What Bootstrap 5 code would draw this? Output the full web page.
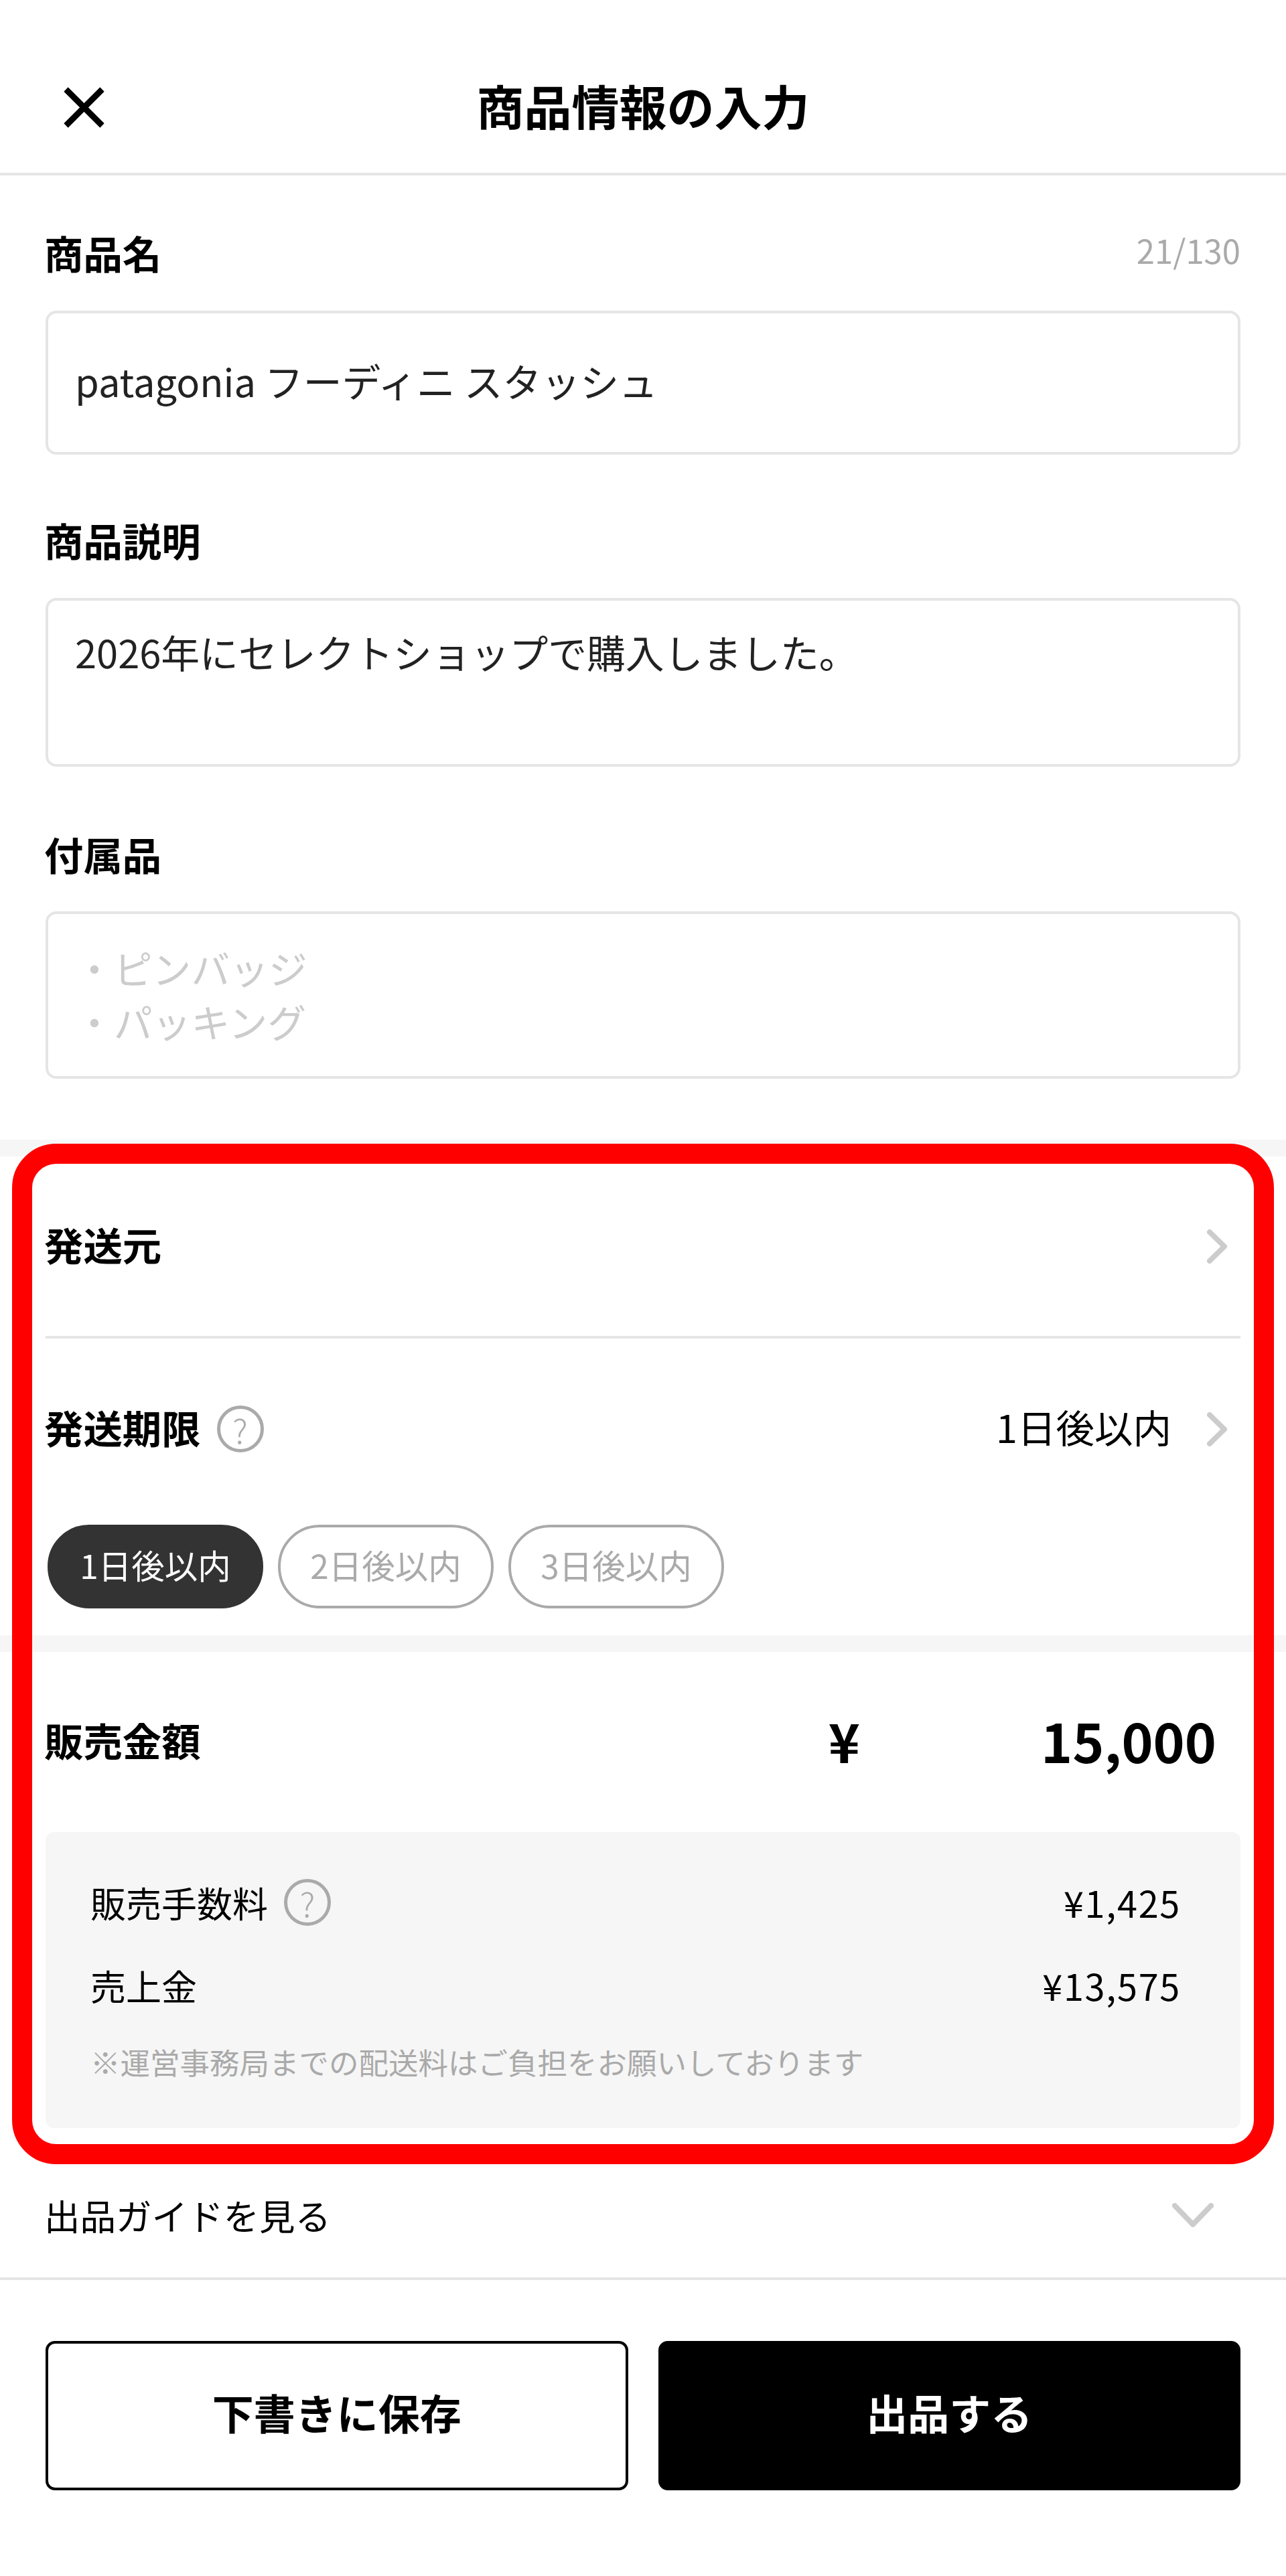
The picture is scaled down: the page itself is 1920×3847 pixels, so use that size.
<!DOCTYPE html>
<html lang="ja">
<head>
<meta charset="UTF-8">
<title>商品情報の入力</title>
<link href="https://cdn.jsdelivr.net/npm/bootstrap@5.3.0/dist/css/bootstrap.min.css" rel="stylesheet">
<style>
    body { font-family: "Noto Sans CJK JP", "Noto Sans", sans-serif; color: #000; background: #fff; height: 3847px; }
    .top-bar { height: 262px; border-bottom: 4px solid #e5e5e5; padding-left: 95px; padding-top: 62px; }
    .top-title { font-size: 71px; font-weight: 700; left: 0; right: 0; top: 156px; transform: translateY(-50%); line-height: 1; }
    .field-head { height: 80px; }
    .head-text { font-size: 58.4px; font-weight: 700; line-height: 1; padding-bottom: 6px; margin-left: -2px; }
    .char-count { font-size: 49px; color: #aaa; padding-bottom: 14px; }
    .form-box.form-control { border: 4px solid #e5e5e5; border-radius: 16px; font-size: 57.8px; color: #222; padding: 0 40px; box-shadow: none; resize: none; overflow: hidden; }
    .form-box::placeholder { color: #ccc; }
    .box-name.form-control { height: 215px; margin-top: 44px; padding-bottom: 8px; }
    .box-desc.form-control { height: 252px; margin-top: 44px; padding-top: 34px; line-height: 84px; }
    .box-extra.form-control { height: 250px; margin-top: 43px; padding-top: 40px; line-height: 80px; }
    .gap-1st { margin-top: 90px; }
    .gap-2nd { margin-top: 93px; }
    .pad-side { padding: 78px 68px 0; }
    .gray-band { height: 25px; background: #f6f6f6; }
    .gray-band.first-band { margin-top: 91px; }
    .ship-from { height: 268px; padding-left: 68px; padding-right: 88px; }
    .thin-rule { height: 4px; background: #e5e5e5; margin: 0 68px; }
    .ship-limit { height: 270px; padding-left: 68px; padding-right: 88px; }
    .val-text { font-size: 57.5px; line-height: 1; padding-bottom: 6px; margin-left: auto; margin-right: 53px; }
    .pill-row { padding: 8px 0 40px 71px; gap: 22px; }
    .pill-opt { width: 322px; height: 125px; border-radius: 62px; border: 4px solid #aaa; color: #aaa; font-size: 49.5px; background: #fff; padding-bottom: 4px; }
    .pill-opt.active-opt { background: #333; border-color: #333; color: #fff; }
    .help-mark { width: 70px; height: 70px; border: 5px solid #aaa; color: #aaa; font-size: 50px; line-height: 1; font-weight: 300; flex: none; }
    .price-row { height: 269px; padding-left: 68px; padding-right: 104px; }
    .yen-mark { font-size: 80px; font-weight: 700; line-height: 1; padding-bottom: 8px; }
    .price-val { width: 532px; text-align: right; font-size: 80px; font-weight: 700; line-height: 1; padding-bottom: 8px; }
    .fee-box { margin: 0 68px; height: 442px; background: #f6f6f6; border-radius: 12px; padding: 65px 89px 0 67px; }
    .fee-row { height: 80px; font-size: 53px; line-height: 1; }
    .fee-row + .fee-row { margin-top: 44px; }
    .fee-amt { font-size: 54px; letter-spacing: 1.7px; }
    .fee-note { font-size: 44.5px; color: #aaa; height: 80px; margin-top: 36px; white-space: nowrap; padding-bottom: 4px; }
    .guide-row { height: 190px; margin-top: 37px; padding-left: 66px; padding-right: 108px; border-bottom: 4px solid #e5e5e5; font-size: 53.5px; }
    .action-row { padding: 91px 68px 0; gap: 45px; }
    .act-btn.btn { flex: 1; height: 223px; font-size: 62px; font-weight: 700; border-radius: 14px; border: 4px solid #000; padding-bottom: 16px; }
    .highlight-frame { left: 18px; top: 1708px; width: 1884px; height: 1524px; border: 30px solid #f00; border-radius: 66px; pointer-events: none; }
</style>
</head>
<body class="position-relative">

<header class="top-bar d-flex align-items-center position-relative">
    <svg width="61" height="61" viewBox="0 0 61 61" class="position-relative z-1" fill="none" stroke="#000" stroke-width="9"><path d="M3.5 3.5 57.5 57.5M57.5 3.5 3.5 57.5"/></svg>
    <div class="top-title position-absolute text-center">商品情報の入力</div>
</header>

<section class="pad-side">
    <div class="field-head d-flex justify-content-between align-items-center">
        <span class="head-text">商品名</span>
        <span class="char-count">21/130</span>
    </div>
    <input class="form-control form-box box-name" type="text" value="patagonia フーディニ スタッシュ">

    <div class="field-head gap-1st d-flex align-items-center">
        <span class="head-text">商品説明</span>
    </div>
    <textarea class="form-control form-box box-desc">2026年にセレクトショップで購入しました。</textarea>

    <div class="field-head gap-2nd d-flex align-items-center">
        <span class="head-text">付属品</span>
    </div>
    <textarea class="form-control form-box box-extra" placeholder="・ピンバッジ&#10;・パッキング"></textarea>
</section>

<div class="gray-band first-band"></div>

<section>
    <div class="ship-from d-flex justify-content-between align-items-center">
        <span class="head-text">発送元</span>
        <svg width="30" height="51" viewBox="0 0 30 51" fill="none" stroke="#ccc" stroke-width="8" stroke-linecap="round" stroke-linejoin="round"><path d="M4 4 26 25.5 4 47"/></svg>
    </div>
    <div class="thin-rule"></div>
    <div class="ship-limit d-flex align-items-center">
        <span class="head-text">発送期限</span>
        <span class="help-mark rounded-circle d-flex align-items-center justify-content-center ms-4">?</span>
        <span class="val-text">1日後以内</span>
        <svg width="30" height="51" viewBox="0 0 30 51" fill="none" stroke="#ccc" stroke-width="8" stroke-linecap="round" stroke-linejoin="round"><path d="M4 4 26 25.5 4 47"/></svg>
    </div>
    <div class="pill-row d-flex">
        <span class="pill-opt active-opt d-flex align-items-center justify-content-center">1日後以内</span>
        <span class="pill-opt d-flex align-items-center justify-content-center">2日後以内</span>
        <span class="pill-opt d-flex align-items-center justify-content-center">3日後以内</span>
    </div>
</section>

<div class="gray-band"></div>

<section>
    <div class="price-row d-flex align-items-center">
        <span class="head-text">販売金額</span>
        <span class="yen-mark ms-auto">¥</span>
        <span class="price-val">15,000</span>
    </div>
    <div class="fee-box">
        <div class="fee-row d-flex align-items-center">
            <span>販売手数料</span>
            <span class="help-mark rounded-circle d-flex align-items-center justify-content-center ms-4">?</span>
            <span class="fee-amt ms-auto">¥1,425</span>
        </div>
        <div class="fee-row d-flex align-items-center justify-content-between">
            <span>売上金</span>
            <span class="fee-amt">¥13,575</span>
        </div>
        <div class="fee-note d-flex align-items-center">※運営事務局までの配送料はご負担をお願いしております</div>
    </div>
</section>

<div class="guide-row d-flex justify-content-between align-items-center">
    <span>出品ガイドを見る</span>
    <svg width="62" height="36" viewBox="0 0 62 36" fill="none" stroke="#ccc" stroke-width="8" stroke-linecap="round" stroke-linejoin="round"><path d="M4 4 31 32 58 4"/></svg>
</div>

<div class="action-row d-flex">
    <button class="btn btn-outline-dark act-btn bg-white text-black" type="button">下書きに保存</button>
    <button class="btn btn-dark act-btn bg-black text-white" type="button">出品する</button>
</div>

<div class="highlight-frame position-absolute"></div>

<script src="https://cdn.jsdelivr.net/npm/bootstrap@5.3.0/dist/js/bootstrap.bundle.min.js"></script>
</body>
</html>
